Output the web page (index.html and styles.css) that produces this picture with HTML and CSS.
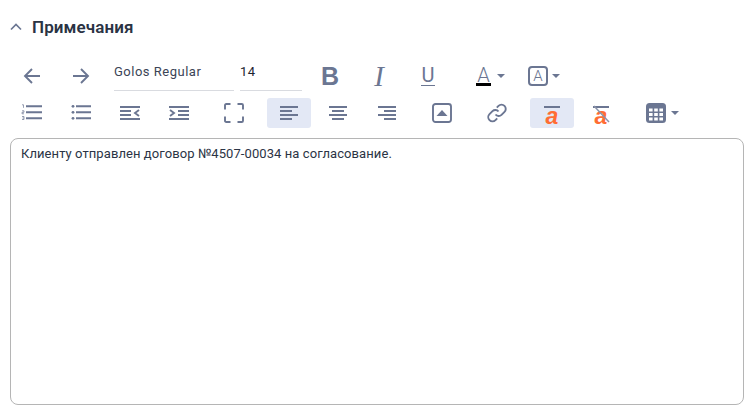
FILE: index.html
```html
<!DOCTYPE html>
<html lang="ru">
<head>
    <meta charset="UTF-8">
    <meta name="viewport" content="width=device-width, initial-scale=1.0">
    <title>Примечания</title>
    <link rel="stylesheet" href="styles.css">
</head>
<body>

<section class="notes">
    <div class="notes-header">
        <svg class="chevron" width="12" height="8" viewBox="0 0 12 8"><path d="M1 6.500 6 1.500l5 5" fill="none" stroke="#6b7692" stroke-width="1.700"/></svg>
        <h2 class="notes-title">Примечания</h2>
    </div>

    <div class="toolbar-row">
        <button class="tool"><svg width="20" height="20" viewBox="0 0 20 20"><path d="M18 10H3M10 3l-7 7 7 7" class="line"/></svg></button>
        <button class="tool"><svg width="20" height="20" viewBox="0 0 20 20"><path d="M2 10h15M10 3l7 7-7 7" class="line"/></svg></button>
        <div class="select select-font">Golos Regular</div>
        <div class="select select-size">14</div>
        <button class="tool tool-b"><span class="glyph-b">B</span></button>
        <button class="tool"><span class="glyph-i">I</span></button>
        <button class="tool"><span class="glyph-u">U</span></button>
        <button class="tool tool-color">
            <span class="glyph-a">A</span>
            <i class="caret"></i>
        </button>
        <button class="tool tool-bg">
            <span class="glyph-box">A</span>
            <i class="caret"></i>
        </button>
    </div>

    <div class="toolbar-row toolbar-second">
        <button class="tool"><svg width="22" height="18" viewBox="0 0 22 18"><path d="M5 2.300h16M5 8.300h16M5 14.300h16" class="line" stroke-width="1.600"/><path d="M1 .8h1.500v3M1 6.800h2v1.500H1v1.500h2M1 12.500h2v3H1M1.500 14H3" fill="none" stroke="#6b7692" stroke-width=".7"/></svg></button>
        <button class="tool"><svg width="22" height="18" viewBox="0 0 22 18"><path d="M6 2.300h15M6 8.300h15M6 14.300h15" class="line" stroke-width="1.600"/><circle cx="3" cy="2.300" r="1.400" class="fill"/><circle cx="3" cy="8.300" r="1.400" class="fill"/><circle cx="3" cy="14.300" r="1.400" class="fill"/></svg></button>
        <button class="tool"><svg width="20" height="16" viewBox="0 0 20 16"><path d="M0 2h20M0 6h11M0 10h11M0 14h20" class="line" stroke-width="1.700"/><path d="M19 5l-4 3 4 3" class="line" stroke-width="1.700"/></svg></button>
        <button class="tool"><svg width="20" height="16" viewBox="0 0 20 16"><path d="M0 2h20M9 6h11M9 10h11M0 14h20" class="line" stroke-width="1.700"/><path d="M1 5l4 3-4 3" class="line" stroke-width="1.700"/></svg></button>
        <button class="tool group-start"><svg width="20" height="20" viewBox="0 0 20 20"><path d="M1 6.500V2.300Q1 1 2.300 1H6.500M13.500 1h4.200Q19 1 19 2.300V6.500M19 13.500v4.200Q19 19 17.700 19H13.500M6.500 19H2.300Q1 19 1 17.700V13.500" class="line" stroke-width="2"/></svg></button>
        <button class="tool group-start active"><svg width="18" height="14" viewBox="0 0 18 14"><path d="M0 1h18M0 5h12M0 9h18M0 13h12" class="line" stroke-width="1.700"/></svg></button>
        <button class="tool"><svg width="18" height="14" viewBox="0 0 18 14"><path d="M0 1h18M3 5h12M0 9h18M3 13h12" class="line" stroke-width="1.700"/></svg></button>
        <button class="tool"><svg width="18" height="14" viewBox="0 0 18 14"><path d="M0 1h18M6 5h12M0 9h18M6 13h12" class="line" stroke-width="1.700"/></svg></button>
        <button class="tool group-start"><svg width="20" height="20" viewBox="0 0 20 20"><rect x="1" y="1" width="18" height="18" rx="2.500" class="line" stroke-width="2"/><path d="M4.500 13 10 7l5.500 6z" class="fill"/></svg></button>
        <button class="tool group-start"><svg width="22" height="22" viewBox="0 0 22 22"><path d="M9.500 12.500a4 4 0 0 0 6 .4l3-3a4.200 4.200 0 0 0-6-6l-1.700 1.700M12.500 9.500a4 4 0 0 0-6-.4l-3 3a4.200 4.200 0 0 0 6 6l1.700-1.700" class="line" stroke-width="1.800"/></svg></button>
        <button class="tool group-start active">
            <span class="glyph-over">a</span>
        </button>
        <button class="tool">
            <span class="glyph-over">a</span>
            <svg class="strike" width="18" height="18" viewBox="0 0 18 18"><path d="M1 1l15 16" stroke="#8a93aa" stroke-width="1.500"/></svg>
        </button>
        <button class="tool tool-table">
            <svg width="20" height="20" viewBox="0 0 20 20"><rect width="20" height="20" rx="3.500" class="fill"/><path d="M3 5.500h3.600v3H3zM8.200 5.500h3.600v3H8.200zM13.400 5.500h3.600v3h-3.600zM3 10h3.600v3H3zM8.200 10h3.600v3H8.200zM13.400 10h3.600v3h-3.600zM3 14.500h3.600v3H3zM8.200 14.500h3.600v3H8.200zM13.400 14.500h3.600v3h-3.600z" fill="#fff"/></svg>
            <i class="caret"></i>
        </button>
    </div>

    <div class="editor">Клиенту отправлен договор №4507-00034 на согласование.</div>
</section>

</body>
</html>
```

FILE: styles.css
```css
* {
    box-sizing: border-box;
}

html, body {
    height: 100%;
}

body {
    margin: 0;
    background-color: #fff;
    font-family: 'Roboto', 'Noto Sans', sans-serif;
    color: #2b3445;
}

.notes {
    display: flex;
    flex-direction: column;
    height: 405px;
    padding: 0 12px 0 10px;
}

.notes-header {
    display: flex;
    align-items: center;
    height: 54px;
}

.chevron {
    display: block;
    margin-right: 10px;
    margin-top: -1px;
}

.notes-title {
    margin: 0;
    font-size: 17px;
    font-weight: 600;
    letter-spacing: .1px;
    color: #2a3344;
}

.toolbar-row {
    display: flex;
    margin-top: 7px;
    height: 30px;
    gap: 5px;
}

.tool {
    position: relative;
    display: flex;
    align-items: center;
    justify-content: center;
    flex: none;
    width: 44px;
    height: 30px;
    padding: 0;
    background: none;
    border: none;
    border-radius: 3px;
    font-family: inherit;
}

.tool svg {
    flex: none;
}

.tool.active {
    background-color: #e3e8f5;
}

.group-start {
    margin-left: 6px;
}

.line {
    fill: none;
    stroke: #6b7692;
    stroke-width: 1.900;
}

.fill {
    fill: #6b7692;
}

.select {
    flex: none;
    height: 30px;
    padding-top: 3px;
    border-bottom: 1px solid #d9dbe0;
    font-size: 13px;
    line-height: 16px;
    letter-spacing: .5px;
}

.select-font {
    width: 120px;
    margin-left: 6px;
    color: #3b4456;
}

.select-size {
    width: 62px;
    margin-left: 1px;
    color: #1c2430;
}

.tool-b {
    margin-left: 1px;
}

.glyph-b {
    font-family: 'Liberation Sans', sans-serif;
    font-size: 25px;
    font-weight: 700;
    color: #6b7692;
}

.glyph-i {
    font-family: 'Liberation Serif', serif;
    font-size: 29px;
    font-style: italic;
    color: #6b7692;
}

.glyph-u {
    display: block;
    height: 20px;
    padding: 0 1px;
    border-bottom: 1.500px solid #6b7692;
    font-size: 20px;
    line-height: 18px;
    color: #6b7692;
}

.tool-color {
    justify-content: flex-start;
    gap: 6px;
    padding-left: 9px;
    margin-left: 12px;
}

.glyph-a {
    display: block;
    width: 15px;
    height: 19px;
    border-bottom: 3px solid #000;
    font-size: 20px;
    font-weight: 300;
    line-height: 16px;
    text-align: center;
    color: #6b7692;
}

.tool-bg {
    justify-content: flex-start;
    gap: 4px;
    padding-left: 8px;
    margin-left: 4px;
}

.glyph-box {
    display: block;
    width: 20px;
    height: 20px;
    border: 2px solid #6b7692;
    border-radius: 4px;
    font-size: 15px;
    font-weight: 300;
    line-height: 16px;
    text-align: center;
    color: #6b7692;
}

.caret {
    display: block;
    flex: none;
    width: 0;
    height: 0;
    border-left: 4px solid transparent;
    border-right: 4px solid transparent;
    border-top: 4px solid #6b7692;
}

.glyph-over {
    display: block;
    width: 16px;
    height: 17px;
    margin-top: 2px;
    border-top: 2px solid #6b7692;
    font-family: 'Liberation Sans', sans-serif;
    font-size: 23px;
    font-style: italic;
    font-weight: 700;
    line-height: 16px;
    text-align: center;
    color: #ff6d33;
}

.strike {
    position: absolute;
    left: 14px;
    top: 7px;
}

.tool-table {
    justify-content: flex-start;
    gap: 5px;
    padding-left: 12px;
    margin-left: 6px;
}

.editor {
    flex: 1;
    margin-top: 10px;
    padding: 6px 10px;
    border: 1px solid #b5b5b5;
    border-radius: 8px;
    font-size: 13px;
    letter-spacing: .08px;
    line-height: 18px;
    color: #2b3445;
}
```
